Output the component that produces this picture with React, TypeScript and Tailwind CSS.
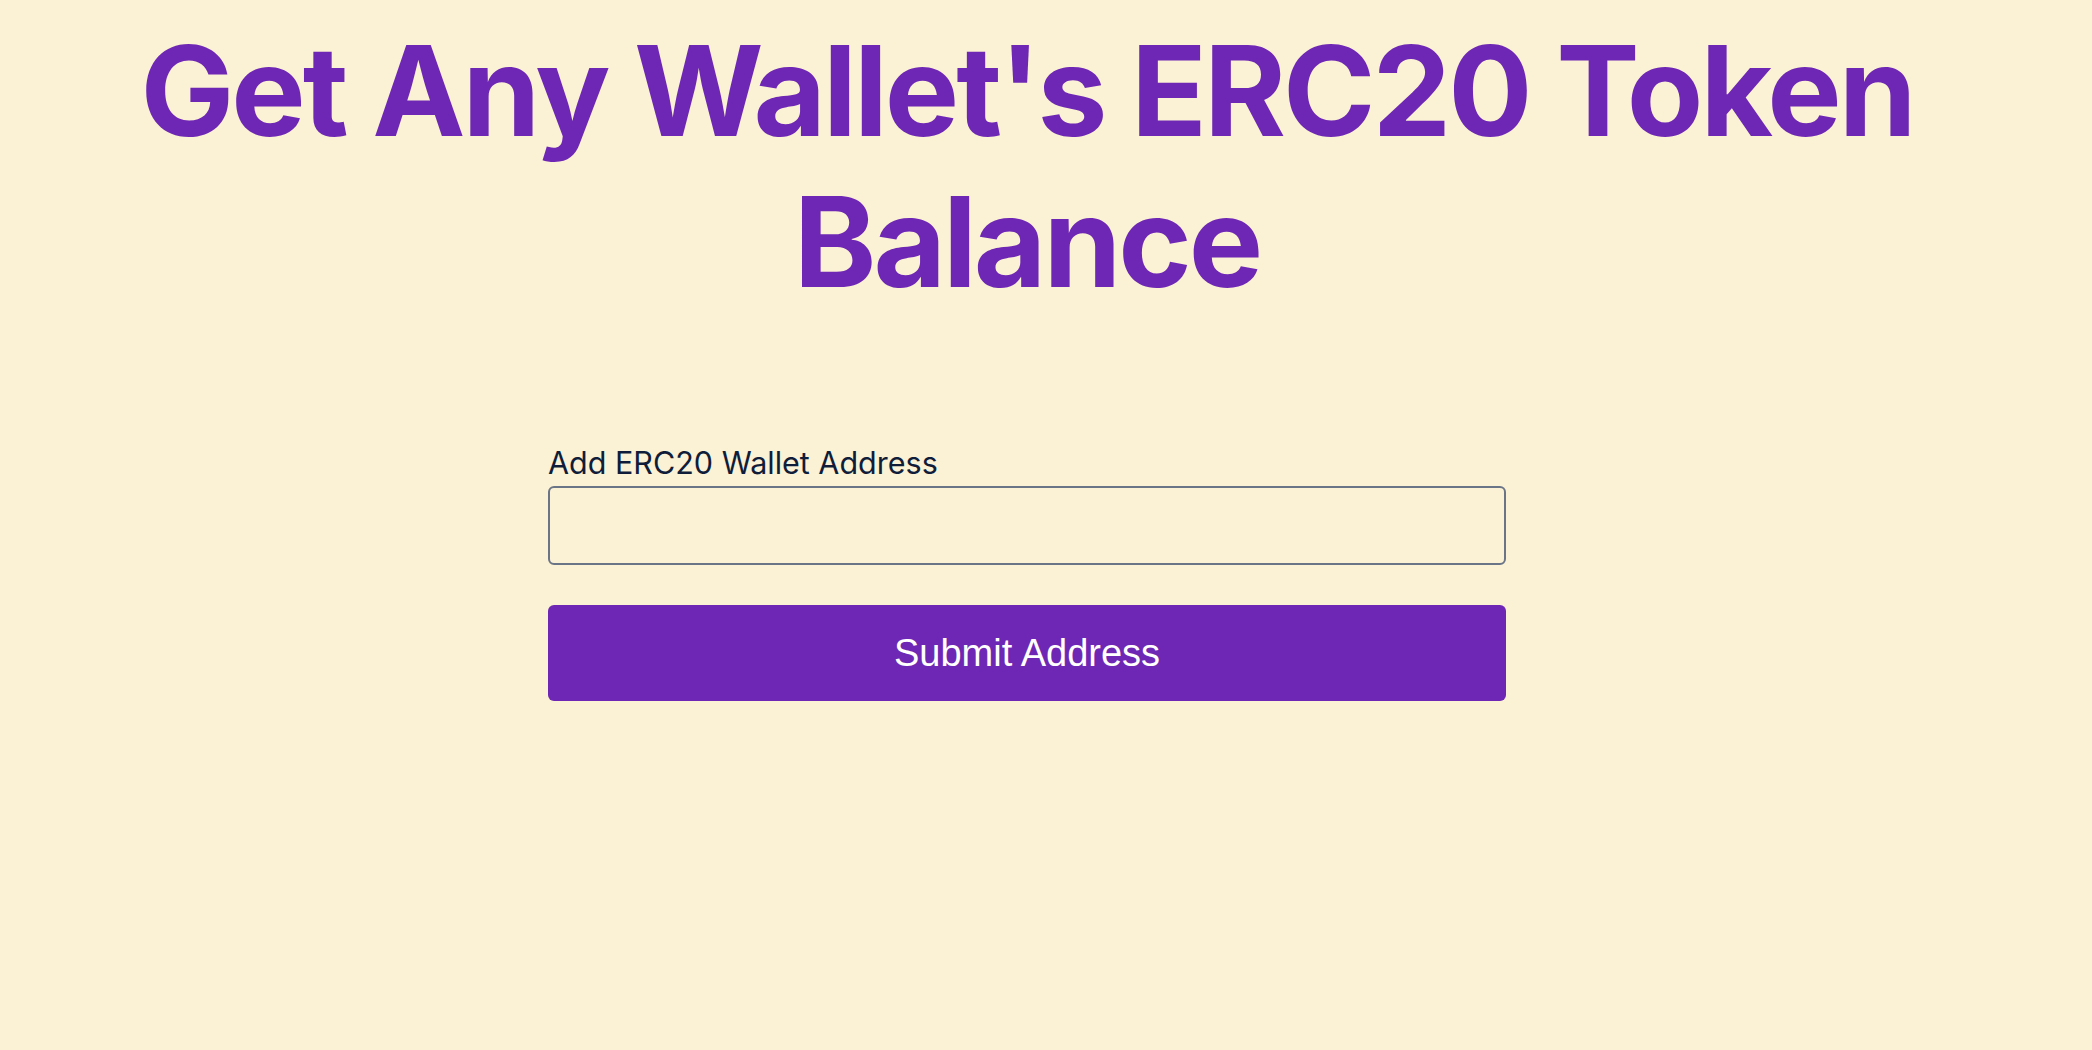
import React from 'react';

const App: React.FC = () => {
  return (
    <div className="min-h-screen w-full bg-[#fbf1d5] font-['Inter','Noto_Sans',sans-serif]">
      <div className="pr-[38px] flex flex-col items-center">
        <h1 className="mt-[15px] text-center text-[125px] leading-[151px] font-bold tracking-[-0.024em] text-[#6e27b4] max-w-[1900px]">
          Get Any Wallet's ERC20 Token Balance
        </h1>

        <form className="mt-[127px] w-[958px] flex flex-col" onSubmit={(e) => e.preventDefault()}>
          <label htmlFor="address" className="text-[30.5px] leading-[38px] text-[#0f1d3a]">
            Add ERC20 Wallet Address
          </label>
          <input
            id="address"
            type="text"
            className="mt-[4px] h-[79px] w-full rounded-[6px] border-2 border-[#6b7588] bg-transparent px-4 text-[28px] outline-none"
          />
          <button
            type="submit"
            className="mt-[40px] h-[96px] w-full rounded-[6px] bg-[#6e27b4] text-white text-[38px] font-['Liberation_Sans',Arial,sans-serif]"
          >
            Submit Address
          </button>
        </form>
      </div>
    </div>
  );
};

export default App;
